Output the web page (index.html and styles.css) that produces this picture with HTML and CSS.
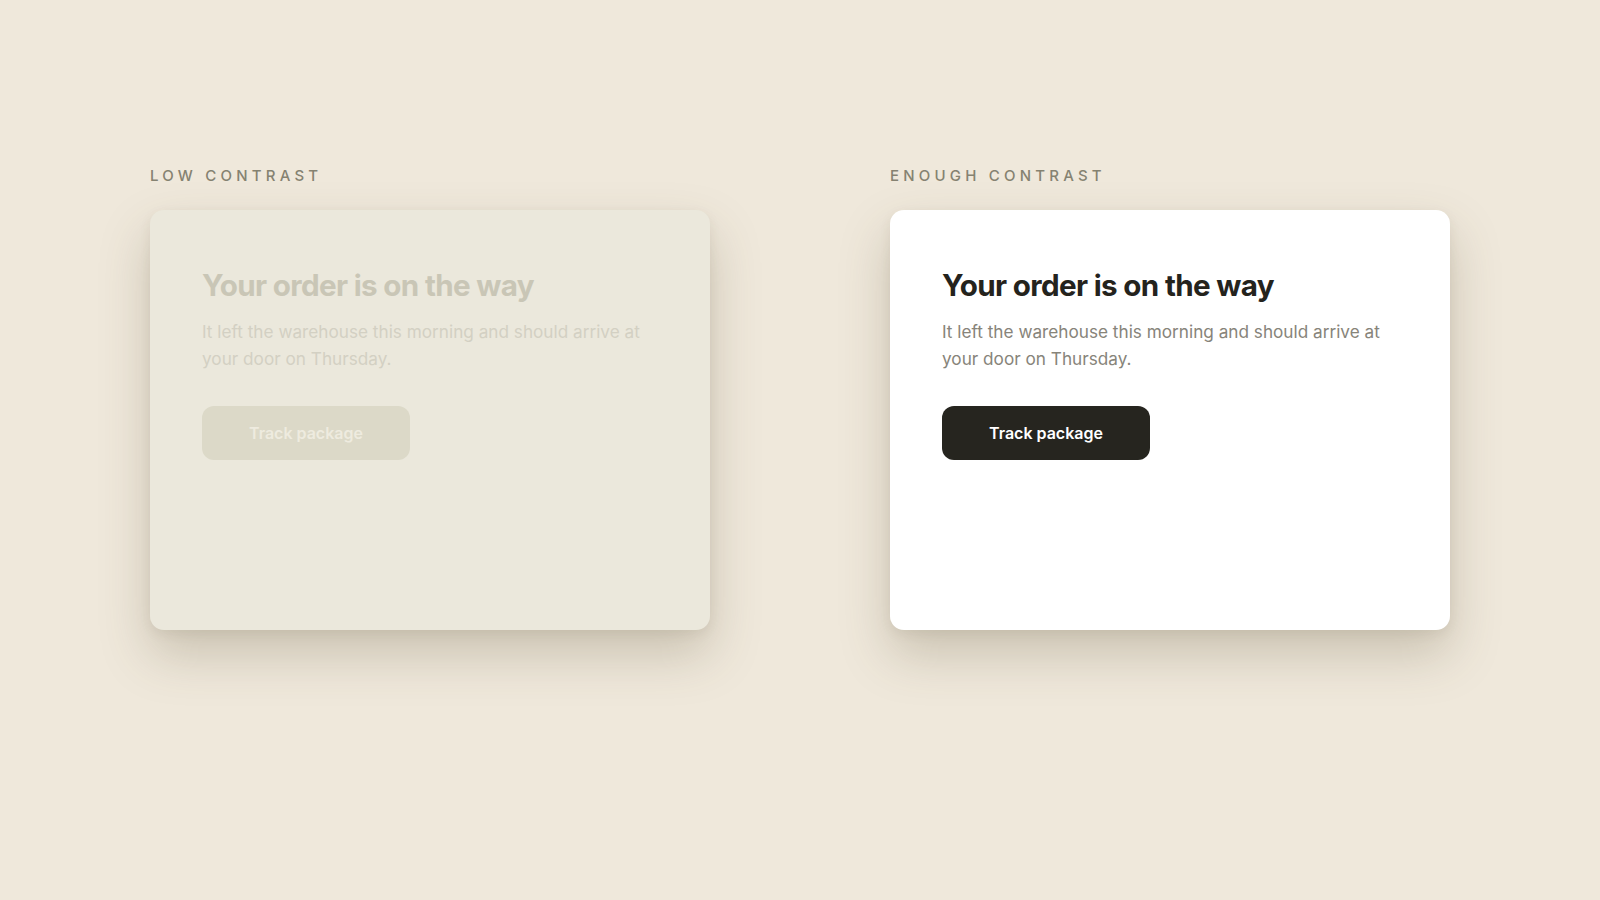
FILE: index.html
```html
<!DOCTYPE html>
<html lang="en">
<head>
<meta charset="utf-8">
<title>Contrast comparison</title>
<link rel="stylesheet" href="styles.css">
</head>
<body>
<main class="stage">
  <section class="column">
    <h2 class="label">Low contrast</h2>
    <div class="card card-low">
      <h1 class="title">Your order is on the way</h1>
      <p class="text">It left the warehouse this morning and should arrive at your door on Thursday.</p>
      <button class="btn" type="button">Track package</button>
    </div>
  </section>
  <section class="column">
    <h2 class="label">Enough contrast</h2>
    <div class="card card-high">
      <h1 class="title">Your order is on the way</h1>
      <p class="text">It left the warehouse this morning and should arrive at your door on Thursday.</p>
      <button class="btn" type="button">Track package</button>
    </div>
  </section>
</main>
</body>
</html>
```

FILE: styles.css
```css
* { box-sizing: border-box; }
html, body { margin: 0; padding: 0; }
body {
  width: 1600px;
  height: 900px;
  background: #efe8db;
  font-family: Inter, "Noto Sans", "Liberation Sans", sans-serif;
  overflow: hidden;
}
.stage {
  display: grid;
  grid-template-columns: 560px 560px;
  column-gap: 180px;
  justify-content: center;
  padding-top: 167px;
}
.column {
  display: flex;
  flex-direction: column;
  gap: 25px;
}
.label {
  margin: 0;
  font-size: 15px;
  font-weight: 500;
  letter-spacing: 0.28em;
  text-transform: uppercase;
  color: #858271;
  line-height: 18px;
}
.card {
  height: 420px;
  border-radius: 14px;
  padding: 57px 52px 52px;
  display: flex;
  flex-direction: column;
  align-items: flex-start;
  box-shadow: 0 24px 50px rgba(90, 80, 50, 0.25), 0 4px 12px rgba(90, 80, 50, 0.08);
}
.card-low { background: #ebe8dc; }
.card-high { background: #ffffff; }
.title {
  margin: 0;
  font-size: 29.6px;
  line-height: 36px;
  font-weight: 700;
  letter-spacing: -0.022em;
}
.text {
  margin: 16px 0 0;
  font-size: 17.2px;
  line-height: 26.5px;
  font-weight: 400;
  max-width: 456px;
}
.btn {
  margin-top: 34px;
  border: none;
  border-radius: 12px;
  padding: 0;
  font-family: inherit;
  font-size: 16px;
  line-height: 20px;
  font-weight: 600;
  width: 208px;
  height: 54px;
  text-align: center;
  white-space: nowrap;
  cursor: pointer;
}
.card-low .title { color: #c9c6b6; }
.card-low .text { color: #d3d0c3; }
.card-low .btn { background: #dcd9c8; color: #eeebdf; }
.card-high .title { color: #24231d; }
.card-high .text { color: #87847a; }
.card-high .btn { background: #26251f; color: #ffffff; }
```
